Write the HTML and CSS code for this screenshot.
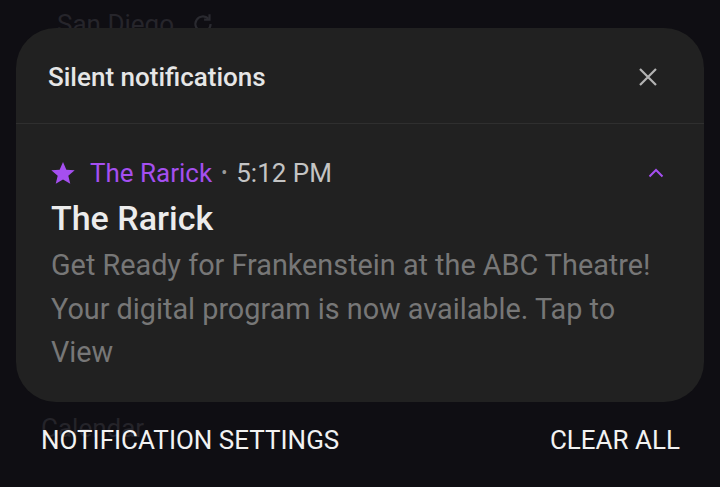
FILE: index.html
```html
<!DOCTYPE html>
<html lang="en">
<head>
    <meta charset="UTF-8">
    <title>Silent notifications</title>
    <link rel="stylesheet" href="styles.css">
</head>
<body>
    <div class="screen">
        <!-- faded widget behind the panel -->
        <div class="behind">
            <span>San Diego</span>
            <svg class="refresh" width="26" height="26" viewBox="0 0 24 24">
                <path d="M19 12a7 7 0 1 1-2.05-4.95" fill="none" stroke="#2a2a30" stroke-width="2"/>
                <path d="M18 3v5h-5" fill="none" stroke="#2a2a30" stroke-width="2"/>
            </svg>
        </div>

        <div class="panel">
            <div class="panel-head">
                <h1>Silent notifications</h1>
                <svg class="close" width="20" height="20" viewBox="0 0 20 20">
                    <path d="M2 2L18 18M18 2L2 18" stroke="#b4b4b4" stroke-width="2.2"/>
                </svg>
            </div>
            <div class="notice">
                <div class="meta">
                    <svg class="star" width="26" height="26" viewBox="0 0 24 24">
                        <path d="M12 1.8l3.1 7.1 7.7.6-5.9 5 1.8 7.5L12 18l-6.7 4 1.8-7.5-5.9-5 7.7-.6z" fill="#a54ff0"/>
                    </svg>
                    <span class="app">The Rarick</span>
                    <span class="dot">•</span>
                    <span class="time">5:12 PM</span>
                    <svg class="chevron" width="16" height="10" viewBox="0 0 16 10">
                        <path d="M1.5 8.5L8 2L14.5 8.5" fill="none" stroke="#a54ff0" stroke-width="2"/>
                    </svg>
                </div>
                <h2>The Rarick</h2>
                <p>Get Ready for Frankenstein at the ABC Theatre! Your digital program is now available. Tap to View</p>
            </div>
        </div>

        <div class="actions">
            <div class="stack">
                <span class="ghost">Calendar</span>
                <a href="#">NOTIFICATION SETTINGS</a>
            </div>
            <a href="#">CLEAR ALL</a>
        </div>
    </div>
</body>
</html>
```

FILE: styles.css
```css
* {
    margin: 0;
    padding: 0;
}
body {
    background-color: #0f0e13;
    font-family: Roboto, "Noto Sans", sans-serif;
    width: 720px;
    height: 487px;
    overflow: hidden;
}
.behind {
    height: 40px;
    padding: 8px 0 0 57px;
    box-sizing: border-box;
    display: flex;
    align-items: center;
    gap: 16px;
    color: #26252b;
    font-size: 26px;
}
.panel {
    position: relative;
    margin: -12px 16px 0;
    background-color: #212121;
    border-radius: 40px;
}
.panel-head {
    height: 96px;
    padding: 3px 46px 0 32px;
    box-sizing: border-box;
    display: flex;
    align-items: center;
    justify-content: space-between;
    border-bottom: 1px solid #2f2f2f;
}
.panel-head h1 {
    font-size: 26px;
    font-weight: 500;
    color: #e6e6e6;
}
.notice {
    padding: 33px 40px 27px 34px;
}
.meta {
    height: 32px;
    display: flex;
    align-items: center;
    font-size: 26px;
    line-height: 32px;
}
.star {
    margin-right: 14px;
}
.app {
    color: #a54ff0;
}
.dot {
    color: #9a9a9a;
    font-size: 18px;
    margin: 0 9px;
}
.time {
    color: #c4c4c4;
}
.chevron {
    margin-left: auto;
}
.notice h2 {
    margin-top: 9px;
    padding-left: 1px;
    font-size: 34px;
    line-height: 40px;
    font-weight: 500;
    color: #ececec;
}
.notice p {
    margin-top: 6px;
    padding-left: 1px;
    font-size: 28.8px;
    line-height: 43.5px;
    color: #777777;
}
.actions {
    display: flex;
    justify-content: space-between;
    padding: 19px 40px 0 41px;
    font-size: 26px;
    line-height: 38px;
}
.actions a {
    color: #f2f2f2;
    text-decoration: none;
}
.stack {
    display: grid;
}
.stack > * {
    grid-area: 1 / 1;
}
.ghost {
    color: #25242a;
    margin-top: -12px;
}
```
